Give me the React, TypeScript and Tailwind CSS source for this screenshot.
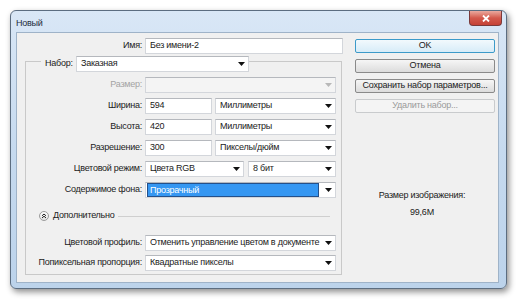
import type { ReactNode } from 'react'

const font = { fontFamily: '"Liberation Sans", Arial, sans-serif' }

function Arrow({ disabled }: { disabled?: boolean }) {
  return (
    <svg width="7" height="4" viewBox="0 0 7 4" className="shrink-0">
      <path d="M0 0H7L3.5 4Z" fill={disabled ? '#b8b8b8' : '#111'} />
    </svg>
  )
}

function Select({ value, width, disabled, highlight }: { value: string; width: string; disabled?: boolean; highlight?: boolean }) {
  return (
    <div
      className={`${width} h-[16px] flex items-center border border-[#d3d6db] border-t-[#b5b8bd] ${
        disabled ? 'bg-[#f4f4f4]' : 'bg-white'
      } pl-[1px] pr-[3px]`}
    >
      {highlight ? (
        <div className="flex-1 h-[14px] bg-[#3597f2] border border-[#24508a] text-white pl-[2px] leading-[12px] mr-[6px]">
          {value}
        </div>
      ) : (
        <span className="flex-1 pl-[3px] whitespace-nowrap overflow-hidden">{value}</span>
      )}
      <Arrow disabled={disabled} />
    </div>
  )
}

function Input({ value, width }: { value: string; width: string }) {
  return (
    <div className={`${width} h-[16px] flex items-center bg-white border border-[#d3d6db] border-t-[#b5b8bd] pl-[4px]`}>
      {value}
    </div>
  )
}

function Row({ label, children, disabled, className = '' }: { label: string; children: ReactNode; disabled?: boolean; className?: string }) {
  return (
    <div className={`flex items-center ${className}`}>
      <span className={`w-[116px] text-right ${disabled ? 'text-[#a3a3a3]' : ''}`}>{label}</span>
      <div className="ml-[3px] flex items-center gap-[3px]">{children}</div>
    </div>
  )
}

function Btn({ children, variant }: { children: ReactNode; variant?: 'default' | 'disabled' }) {
  const cls =
    variant === 'default'
      ? 'border-[#3c9ac9] bg-gradient-to-b from-[#f2f9fd] to-[#d7ecf8]'
      : variant === 'disabled'
        ? 'border-[#c9cbcd] bg-[#f4f4f4] text-[#9a9a9a]'
        : 'border-[#8a8a8a] bg-gradient-to-b from-[#f6f6f6] to-[#dcdcdc]'
  return (
    <div className={`w-[140px] h-[14px] flex items-center justify-center border rounded-[2px] ${cls}`}>
      {children}
    </div>
  )
}

export default function App() {
  return (
    <div className="w-[520px] h-[304px] bg-white overflow-hidden text-[9px] tracking-[-0.25px] text-[#1b1b1b]" style={font}>
      <div className="ml-[10px] mt-[10px] w-[497px] h-[279px] border border-[#5c6d80] rounded-[6px] bg-gradient-to-b from-[#d9e7f6] via-[#c6daef] to-[#bcd3eb] shadow-[2px_3px_6px_rgba(0,0,0,0.45)] flex flex-col">
        {/* Title bar */}
        <div className="h-[21px] flex items-start pl-[5px] relative">
          <span className="mt-[6px] text-[#1e2c3c]">Новый</span>
          <div className="absolute right-[4px] top-0 w-[33px] h-[15px] rounded-b-[4px] border border-t-0 border-[#7a3a3a] bg-gradient-to-b from-[#e9a99f] via-[#d3594c] to-[#c54236] flex items-center justify-center">
            <svg width="8" height="7" viewBox="0 0 8 7">
              <path d="M1 0.5L7 6.5M7 0.5L1 6.5" stroke="white" strokeWidth="1.8" />
            </svg>
          </div>
        </div>

        {/* Client */}
        <div className="ml-[5px] w-[483px] h-[251px] border border-[#9fb3c8] bg-[#f0f0f0] flex">
          {/* Left column */}
          <div className="ml-[8px] w-[318px] pt-[5px] flex flex-col">
            <div className="flex items-center h-[16px]">
              <span className="w-[117px] text-right">Имя:</span>
              <div className="ml-[3px]">
                <Input value="Без имени-2" width="w-[198px]" />
              </div>
            </div>

            <div className="mt-[7px] w-[317px] h-[214px] border border-[#c9c9c9] flex flex-col">
              <div className="-mt-[6px] flex items-center h-[16px]">
                <span className="ml-[15px] w-[35px] pl-[4px] bg-[#f0f0f0]">Набор:</span>
                <Select value="Заказная" width="w-[173px]" />
              </div>

              <div className="mt-[5px] flex flex-col gap-[5px]">
                <Row label="Размер:" disabled>
                  <Select value="" width="w-[191px]" disabled />
                </Row>
                <Row label="Ширина:">
                  <Input value="594" width="w-[67px]" />
                  <Select value="Миллиметры" width="w-[121px]" />
                </Row>
                <Row label="Высота:">
                  <Input value="420" width="w-[67px]" />
                  <Select value="Миллиметры" width="w-[121px]" />
                </Row>
                <Row label="Разрешение:">
                  <Input value="300" width="w-[67px]" />
                  <Select value="Пикселы/дюйм" width="w-[121px]" />
                </Row>
                <Row label="Цветовой режим:">
                  <Select value="Цвета RGB" width="w-[99px]" />
                  <div className="ml-[1px]">
                    <Select value="8 бит" width="w-[88px]" />
                  </div>
                </Row>
                <Row label="Содержимое фона:">
                  <Select value="Прозрачный" width="w-[191px]" highlight />
                </Row>
              </div>

              <div className="mt-[11px] h-[14px] flex items-center">
                <div className="ml-[13px] w-[10px] h-[10px] rounded-full border border-[#9c9c9c] bg-gradient-to-b from-white to-[#e2e2e2] flex items-center justify-center">
                  <svg width="6" height="6" viewBox="0 0 6 6">
                    <path d="M1 2.8L3 1L5 2.8M1 5L3 3.2L5 5" stroke="#222" strokeWidth="1" fill="none" />
                  </svg>
                </div>
                <span className="ml-[4px]">Дополнительно</span>
                <div className="flex-1 ml-[3px] mr-[11px] h-px bg-[#cfcfcf]" />
              </div>

              <Row label="Цветовой профиль:" className="mt-[12px]">
                <Select value="Отменить управление цветом в документе" width="w-[191px]" />
              </Row>
              <Row label="Попиксельная пропорция:" className="mt-[4px]">
                <Select value="Квадратные пикселы" width="w-[191px]" />
              </Row>
            </div>
          </div>

          {/* Right column */}
          <div className="flex flex-col pt-[6px]">
            <div className="ml-[12px] flex flex-col gap-[6px]">
              <Btn variant="default">OK</Btn>
              <Btn>Отмена</Btn>
              <Btn>Сохранить набор параметров...</Btn>
              <Btn variant="disabled">Удалить набор...</Btn>
            </div>
            <div className="ml-[6px] w-[146px] mt-[77px] flex flex-col items-center leading-[11px]">
              <span>Размер изображения:</span>
              <span className="mt-[6px]">99,6M</span>
            </div>
          </div>
        </div>
      </div>
    </div>
  )
}
